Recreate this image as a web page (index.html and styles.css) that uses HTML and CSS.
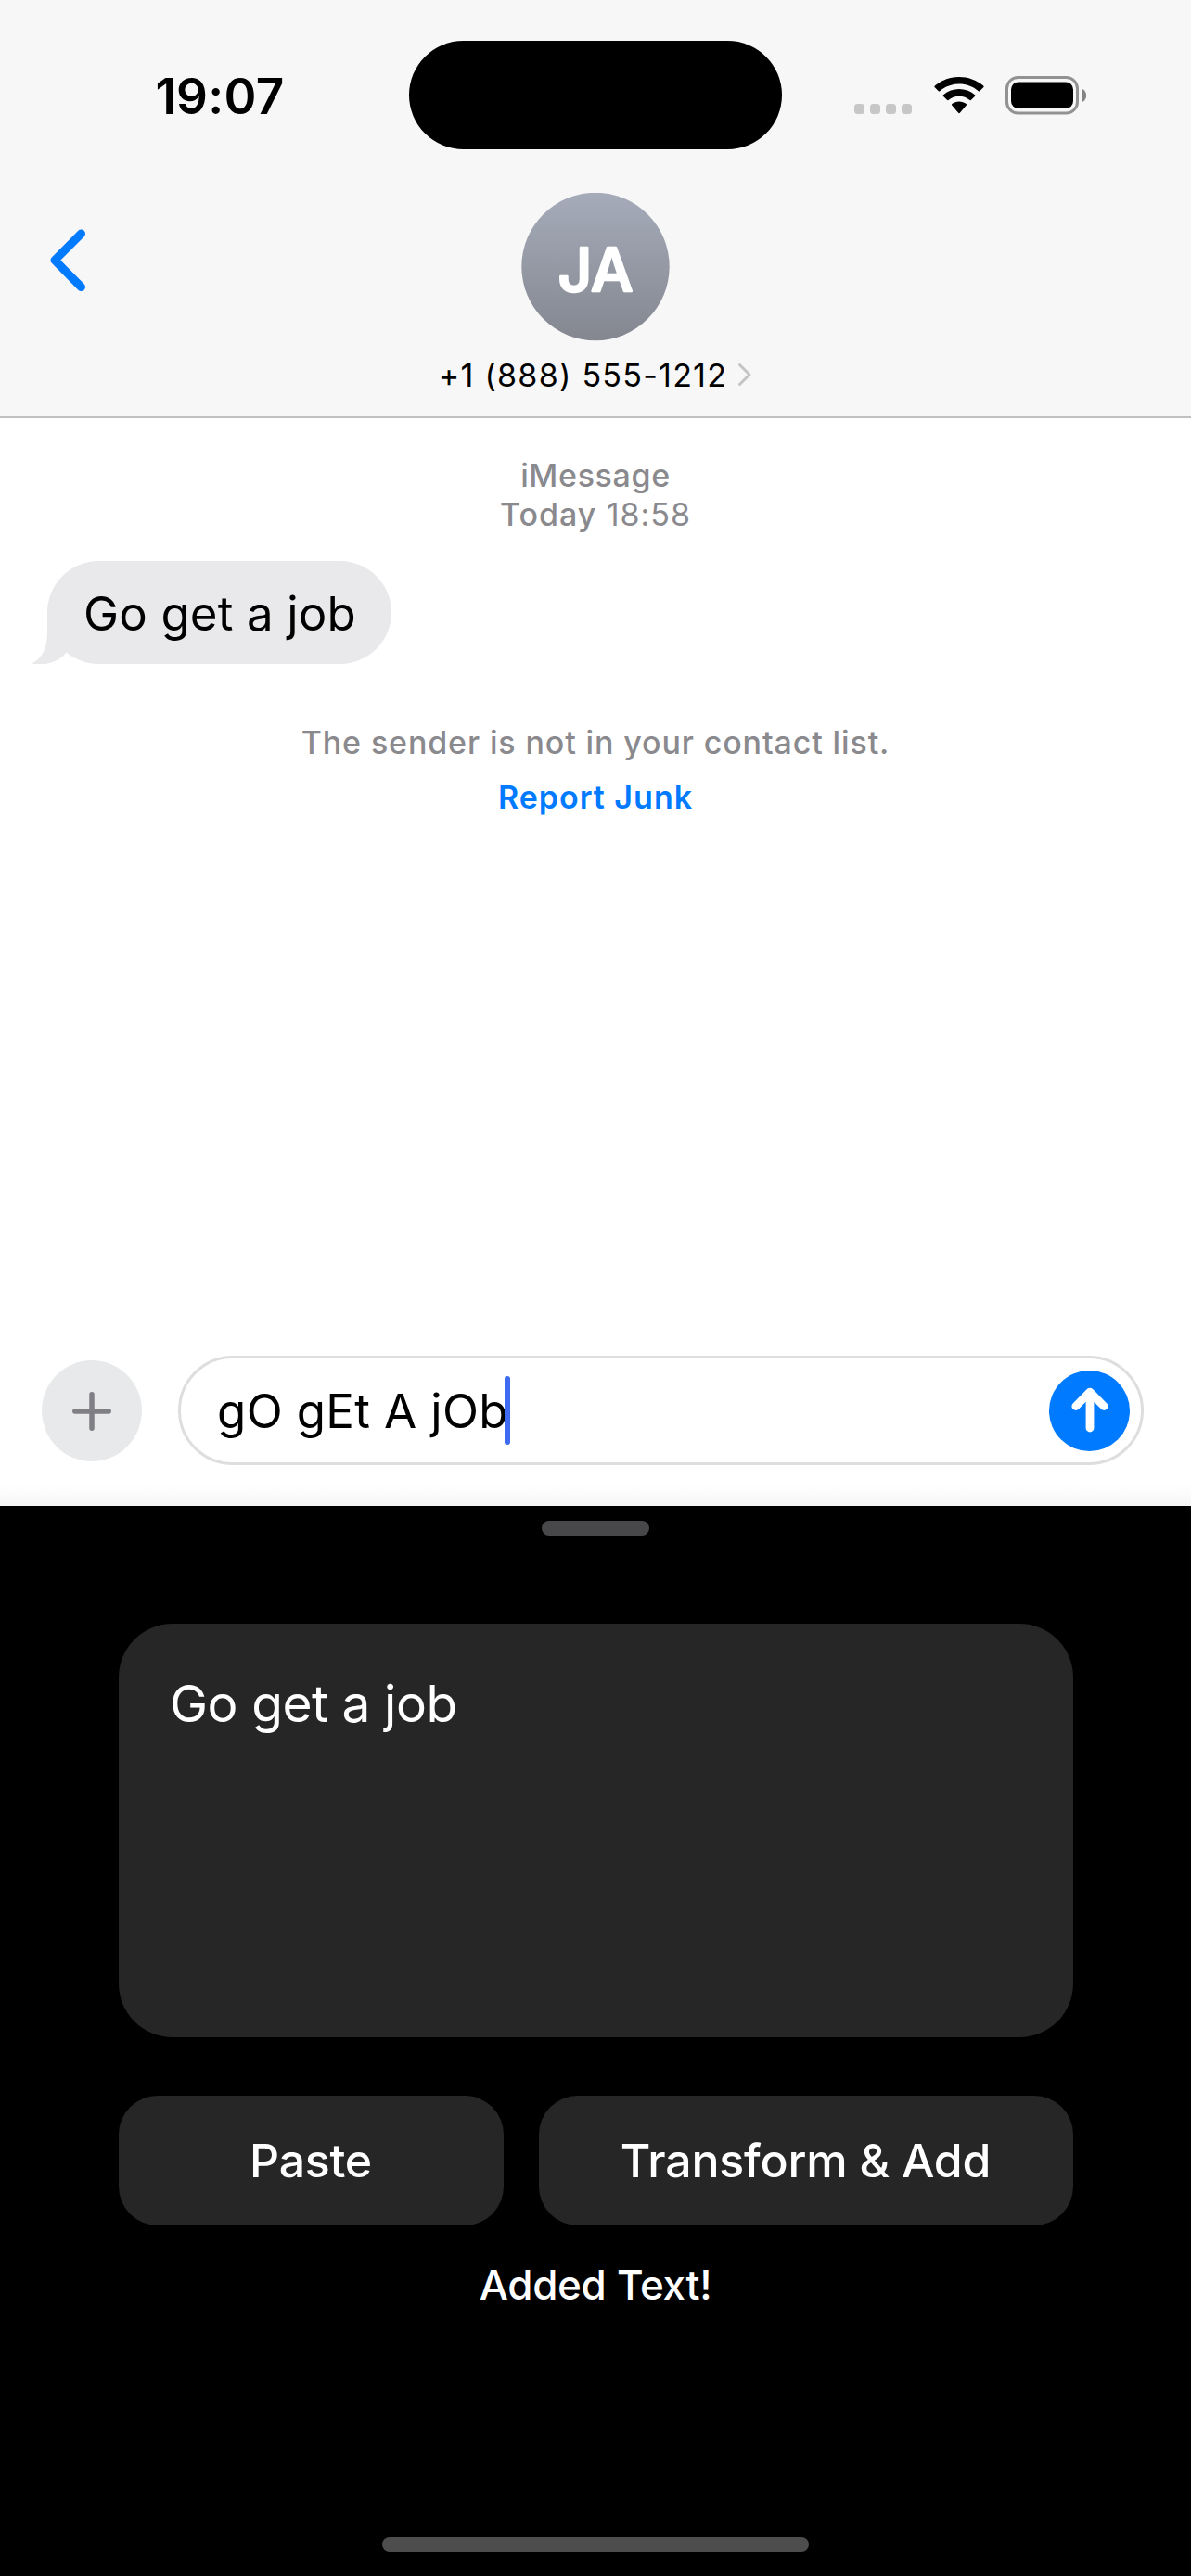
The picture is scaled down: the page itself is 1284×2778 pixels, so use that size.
FILE: index.html
```html
<!DOCTYPE html>
<html lang="en">
<head>
<meta charset="utf-8">
<title>Messages</title>
<link rel="stylesheet" href="styles.css">
</head>
<body>
<div class="screen">
  <header class="header">
    <div class="status">
      <div class="status-time"><span class="time">19:07</span></div>
      <div class="island"></div>
      <div class="status-icons">
        <svg class="dots" width="62" height="11" viewBox="0 0 62 11" fill="#c7c7c8"><rect width="11" height="11" rx="3.5"/><rect x="17" width="11" height="11" rx="3.5"/><rect x="34" width="11" height="11" rx="3.5"/><rect x="51" width="11" height="11" rx="3.5"/></svg>
        <svg class="wifi" width="54" height="40" viewBox="0 0 54 40"><path d="M0.8 11.2 Q0 10.4 0.8 9.6 C15.5 -3.2 38.5 -3.2 53.2 9.6 Q54 10.4 53.2 11.2 L49.2 15.2 Q48.5 15.900 47.800 15.200 C36 4.900 18 4.900 6.200 15.200 Q5.500 15.900 4.800 15.200 Z"/><path d="M9.900 20.800 Q9.200 20 10 19.200 C19.500 11 34.500 11 44 19.200 Q44.800 20 44.100 20.800 L40 24.800 Q39.300 25.500 38.600 24.900 C32 19.200 22 19.200 15.400 24.900 Q14.700 25.500 14 24.800 Z"/><path d="M19.200 30.500 Q18.500 29.700 19.300 29 C23.600 25.600 30.400 25.600 34.700 29 Q35.500 29.700 34.800 30.500 L27.800 38.700 Q27 39.600 26.200 38.700 Z"/></svg>
        <svg class="battery" width="88" height="42" viewBox="0 0 88 42"><rect x="1.500" y="1.500" width="76" height="38.500" rx="12" fill="none" stroke="#929293" stroke-width="3"/><rect x="6" y="6.500" width="67" height="28.500" rx="8"/><path d="M83 14 C88.500 16.500 88.500 25.500 83 28 Z" fill="#858586"/></svg>
      </div>
    </div>
    <div class="contact-row">
      <svg class="back" width="40" height="68" viewBox="0 0 40 68" fill="none" stroke="#007aff" stroke-width="9" stroke-linecap="round" stroke-linejoin="round"><path d="M34.500 5 L6 33.700 L34.500 62.500"/></svg>
      <div class="contact">
        <svg class="avatar" width="160" height="160" viewBox="0 0 160 160"><defs><linearGradient id="avatar-fill" x1="0" y1="0" x2="0" y2="1"><stop offset="0" stop-color="#a5abb9"/><stop offset="1" stop-color="#848790"/></linearGradient></defs><circle cx="80" cy="79.500" r="79.700" fill="url(#avatar-fill)"/><text class="initials" x="80" y="105.500" text-anchor="middle">JA</text></svg>
        <div class="number"><span class="phone">+1 (888) 555-1212</span><svg width="16" height="26" viewBox="0 0 16 26" fill="none" stroke="#c4c4c6" stroke-width="3" stroke-linecap="round" stroke-linejoin="round"><path d="M2.500 2.500 L13 13 L2.500 23.500"/></svg></div>
      </div>
    </div>
  </header>
  <main class="thread">
    <div class="stamp"><div><span class="im">iMessage</span></div><div><span class="today"><b>Today</b> 18:58</span></div></div>
    <div class="bubble"><svg class="tail" width="44" height="56" viewBox="0 0 44 56" fill="#e9e9eb"><path d="M17 0 L44 0 L44 46 L37.500 43.500 C31 52 18 58.500 0 55.500 C12 50 17 38 17 22 Z"/></svg><span class="msg">Go get a job</span></div>
    <div class="notice"><span class="sender">The sender is not in your contact list.</span></div>
    <div class="junk"><span class="report">Report Junk</span></div>
  </main>
  <div class="composer">
    <div class="plus"><svg width="42" height="42" viewBox="0 0 42 42" stroke="#7f7f85" stroke-width="5.500" stroke-linecap="round"><path d="M21 2.800 V39.200 M2.800 21 H39.200"/></svg></div>
    <div class="field"><span class="typed">gO gEt A jOb</span><i class="caret"></i>
      <div class="send"><svg width="40" height="50" viewBox="0 0 40 50" fill="none" stroke="#fff" stroke-width="8.800" stroke-linecap="round" stroke-linejoin="round"><path d="M20 6 V44 M4.800 20.500 L20 5.200 L35.200 20.500"/></svg></div>
    </div>
  </div>
  <section class="panel">
    <div class="grabber"></div>
    <div class="card"><span class="source">Go get a job</span></div>
    <div class="buttons"><div class="btn btn-paste">Paste</div><div class="btn btn-add">Transform &amp; Add</div></div>
    <div class="result">Added Text!</div>
    <div class="home"></div>
  </section>
</div>
</body>
</html>
```
FILE: styles.css
```css
* { box-sizing: border-box; }
body {
  margin: 0;
  background: #fff;
  color: #000;
  font-family: Inter, "Liberation Sans", sans-serif;
}
svg { display: block; flex: none; }
.screen {
  width: 1284px;
  height: 2778px;
  display: flex;
  flex-direction: column;
  overflow: hidden;
}
.header {
  height: 451px;
  background: #f7f7f7;
  border-bottom: 2px solid #c0c0c0;
}
.status {
  display: grid;
  grid-template-columns: 441px 402px 441px;
  height: 161px;
  padding-top: 44px;
}
.status-time {
  display: flex;
  justify-content: center;
  padding-left: 33px;
  line-height: 120px;
}
.time { font-size: 53px; font-weight: 600; letter-spacing: 0.3px; }
.island { height: 117px; border-radius: 59px; background: #000; }
.status-icons { display: flex; align-items: flex-start; padding: 38px 0 0 78px; }
.dots { margin-top: 30px; }
.wifi { margin: 1px 0 0 23.500px; }
.battery { margin-left: 23.500px; }
.contact-row {
  display: grid;
  grid-template-columns: 441px 402px 441px;
  padding-top: 47px;
}
.back { margin: 39px 0 0 53px; }
.contact { display: flex; flex-direction: column; align-items: center; }
.initials {
  font-size: 64px;
  font-weight: 500;
  fill: #fff;
  stroke: #fff;
  stroke-width: 2.500px;
  stroke-linejoin: round;
}
.number {
  display: flex;
  align-items: center;
  gap: 11px;
  height: 44px;
  margin-top: 14px;
}
.phone { font-size: 34px; letter-spacing: 1.250px; white-space: nowrap; }
.thread { flex: none; height: 1011px; padding-top: 41px; text-align: center; }
.stamp { line-height: 42px; font-size: 34px; color: #8a8a8e; }
.im { font-weight: 500; letter-spacing: 0.650px; }
.today { letter-spacing: 0.950px; }
.today b { font-weight: 500; }
.bubble {
  position: relative;
  width: 371px;
  height: 111px;
  margin: 29px 0 0 51px;
  border-radius: 55.500px;
  background: #e9e9eb;
  text-align: left;
  padding-left: 39px;
  line-height: 113px;
}
.msg { position: relative; font-size: 51px; letter-spacing: 0.150px; white-space: nowrap; }
.tail { position: absolute; left: -17px; bottom: 0; }
.notice {
  margin-top: 63px;
  line-height: 44px;
  font-size: 34px;
  font-weight: 500;
  letter-spacing: 0.870px;
  color: #8a8a8e;
}
.junk {
  margin-top: 15px;
  line-height: 44px;
  font-size: 34px;
  font-weight: 600;
  letter-spacing: 1px;
  color: #007aff;
}
.composer {
  display: flex;
  flex: none;
  align-items: flex-start;
  gap: 39px;
  height: 162px;
  padding-left: 45px;
  background: linear-gradient(#fff 140px, #f5f5f5);
}
.plus {
  display: flex;
  align-items: center;
  justify-content: center;
  width: 108px;
  height: 109px;
  margin-top: 5px;
  border-radius: 50%;
  background: #e8e9eb;
}
.field {
  display: flex;
  align-items: center;
  width: 1041px;
  height: 118px;
  padding: 0 12px 0 39px;
  border: 3px solid #dedede;
  border-radius: 59px;
  background: #fff;
}
.typed { font-size: 51px; letter-spacing: 0.350px; white-space: nowrap; }
.caret { width: 6px; height: 74px; margin-left: -3.500px; border-radius: 3px; background: #3f6bf2; }
.send {
  display: flex;
  align-items: center;
  justify-content: center;
  width: 87px;
  height: 87px;
  margin-left: auto;
  border-radius: 50%;
  background: #007aff;
}
.panel {
  flex: 1;
  display: flex;
  flex-direction: column;
  align-items: center;
  padding-top: 16px;
  background: #000;
  color: #fff;
}
.grabber { width: 116px; height: 16px; border-radius: 8px; background: #48484a; }
.card {
  width: 1029px;
  height: 446px;
  margin-top: 95px;
  padding: 52px 55.500px;
  border-radius: 58px;
  background: #262626;
  line-height: 68px;
}
.source { font-size: 55px; letter-spacing: -0.450px; }
.buttons { display: flex; gap: 38px; margin-top: 63px; }
.btn {
  height: 140px;
  border-radius: 42px;
  background: #262626;
  text-align: center;
  line-height: 140px;
  font-size: 50px;
  font-weight: 500;
  letter-spacing: -0.220px;
}
.btn-paste { width: 415px; }
.btn-add { width: 576px; }
.result {
  margin-top: 34px;
  line-height: 60px;
  font-size: 44px;
  font-weight: 500;
  letter-spacing: -0.300px;
}
.home { width: 460px; height: 16px; margin: auto 0 26px; border-radius: 8px; background: #4d4d4d; }
```
